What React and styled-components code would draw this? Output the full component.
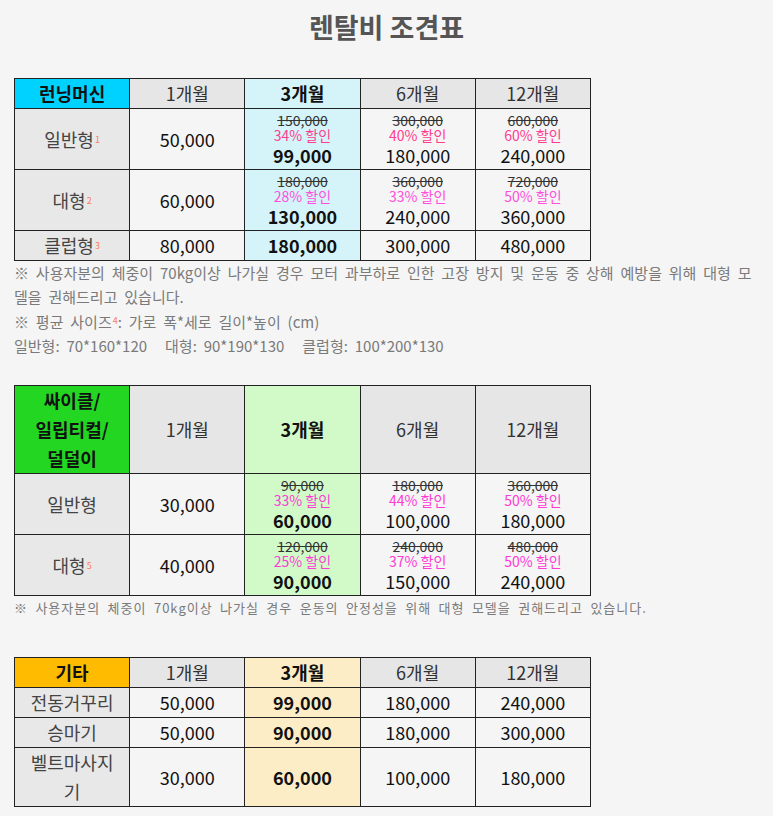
import React from "react";
import styled, { createGlobalStyle } from "styled-components";

const GlobalStyle = createGlobalStyle`
  body {
    margin: 0;
    background: #f5f5f5;
    font-family: "Noto Sans CJK KR", "Noto Sans", sans-serif;
    color: #222;
  }
`;

const Page = styled.div`
  padding: 12px 14px 6px;
`;

const Title = styled.h1`
  margin: 0 0 36px;
  text-align: center;
  font-size: 27px;
  line-height: 30px;
  font-weight: 700;
  color: #555;
`;

const Table = styled.table`
  width: 577px;
  table-layout: fixed;
  border-collapse: collapse;
  border: 1px solid #555;
  margin-top: ${(p) => p.$gap || 0}px;
`;

const HeadCell = styled.th`
  background: ${(p) => p.$bg || "#e6e6e6"};
  border: 1px solid #222;
  padding: 0;
  font-size: 18px;
  line-height: 29px;
  font-weight: ${(p) => (p.$bold ? 700 : 400)};
  color: ${(p) => (p.$bold ? "#111" : "#333")};
  text-align: center;
  vertical-align: middle;
`;

const LabelCell = styled.td`
  background: #e8e8e8;
  border: 1px solid #222;
  padding: 0 9px;
  font-size: 18px;
  line-height: 29px;
  color: #444;
  text-align: center;
  vertical-align: middle;
`;

const Cell = styled.td`
  background: ${(p) => p.$bg || "#f5f5f5"};
  border: 1px solid #222;
  padding: ${(p) => (p.$stack ? "4px 0 2px" : "0")};
  font-size: 18px;
  line-height: 29px;
  color: #111;
  text-align: center;
  vertical-align: middle;
`;

const Mark = styled.sup`
  font-size: 9px;
  color: #ff7a5c;
  vertical-align: 4px;
  margin-left: 1px;
`;

const Strike = styled.div`
  font-size: 14px;
  line-height: 15px;
  color: #333;
  text-decoration: line-through;
`;

const Discount = styled.div`
  font-size: 14px;
  line-height: 15px;
  color: ${(p) => p.$color};
`;

const Price = styled.div`
  font-size: 18px;
  line-height: 24px;
  font-weight: ${(p) => (p.$bold ? 700 : 400)};
`;

const Note = styled.p`
  margin: 0;
  font-size: ${(p) => p.$size || 15}px;
  line-height: 24px;
  letter-spacing: ${(p) => p.$spacing || 0}px;
  word-spacing: 3.5px;
  color: #7a7a7a;
`;

const Gap = styled.span`
  display: inline-block;
  width: ${(p) => p.$w}px;
`;

const months = ["1개월", "3개월", "6개월", "12개월"];

const tables = [
  {
    head: ["런닝머신"],
    headBg: "#00d2ff",
    tint: "#d5f4fa",
    gap: 0,
    rows: [
      {
        label: "일반형",
        mark: "1",
        pink: "#ff3c8e",
        cells: ["50,000", ["150,000", "34% 할인", "99,000"], ["300,000", "40% 할인", "180,000"], ["600,000", "60% 할인", "240,000"]],
      },
      {
        label: "대형",
        mark: "2",
        pink: "#ff4fdc",
        cells: ["60,000", ["180,000", "28% 할인", "130,000"], ["360,000", "33% 할인", "240,000"], ["720,000", "50% 할인", "360,000"]],
      },
      { label: "클럽형", mark: "3", cells: ["80,000", "180,000", "300,000", "480,000"] },
    ],
  },
  {
    head: ["싸이클/", "일립티컬/", "덜덜이"],
    headBg: "#22d622",
    tint: "#d2fac9",
    gap: 27,
    rows: [
      {
        label: "일반형",
        pink: "#ff3ad6",
        cells: ["30,000", ["90,000", "33% 할인", "60,000"], ["180,000", "44% 할인", "100,000"], ["360,000", "50% 할인", "180,000"]],
      },
      {
        label: "대형",
        mark: "5",
        pink: "#ff3ad6",
        cells: ["40,000", ["120,000", "25% 할인", "90,000"], ["240,000", "37% 할인", "150,000"], ["480,000", "50% 할인", "240,000"]],
      },
    ],
  },
  {
    head: ["기타"],
    headBg: "#ffbb00",
    tint: "#fcedc6",
    gap: 37,
    rows: [
      { label: "전동거꾸리", cells: ["50,000", "99,000", "180,000", "240,000"] },
      { label: "승마기", cells: ["50,000", "90,000", "180,000", "300,000"] },
      { label: "벨트마사지기", cells: ["30,000", "60,000", "100,000", "180,000"] },
    ],
  },
];

function PriceTable({ data }) {
  return (
    <Table $gap={data.gap}>
      <thead>
        <tr>
          <HeadCell $bg={data.headBg} $bold>
            {data.head.map((line) => (
              <div key={line}>{line}</div>
            ))}
          </HeadCell>
          {months.map((m, i) => (
            <HeadCell key={m} $bold={i === 1} $bg={i === 1 ? data.tint : undefined}>
              {m}
            </HeadCell>
          ))}
        </tr>
      </thead>
      <tbody>
        {data.rows.map((row) => (
          <tr key={row.label}>
            <LabelCell>
              {row.label}
              {row.mark && <Mark>{row.mark}</Mark>}
            </LabelCell>
            {row.cells.map((c, i) => {
              const bg = i === 1 ? data.tint : undefined;
              if (Array.isArray(c)) {
                return (
                  <Cell key={i} $bg={bg} $stack>
                    <Strike>{c[0]}</Strike>
                    <Discount $color={row.pink}>{c[1]}</Discount>
                    <Price $bold={i === 1}>{c[2]}</Price>
                  </Cell>
                );
              }
              return (
                <Cell key={i} $bg={bg}>
                  <Price as="span" $bold={i === 1}>{c}</Price>
                </Cell>
              );
            })}
          </tr>
        ))}
      </tbody>
    </Table>
  );
}

export default function App() {
  return (
    <>
      <GlobalStyle />
      <Page>
        <Title>렌탈비 조견표</Title>
        <PriceTable data={tables[0]} />
        <Note>
          ※ 사용자분의 체중이 70kg이상 나가실 경우 모터 과부하로 인한 고장 방지 및 운동 중 상해 예방을 위해 대형 모델을 권해드리고 있습니다.
        </Note>
        <Note>
          ※ 평균 사이즈<Mark>4</Mark>: 가로 폭*세로 길이*높이 (cm)
        </Note>
        <Note>
          일반형: 70*160*120<Gap $w={18} />대형: 90*190*130<Gap $w={18} />클럽형: 100*200*130
        </Note>
        <PriceTable data={tables[1]} />
        <Note $size={13} $spacing={1}>
          ※ 사용자분의 체중이 70kg이상 나가실 경우 운동의 안정성을 위해 대형 모델을 권해드리고 있습니다.
        </Note>
        <PriceTable data={tables[2]} />
      </Page>
    </>
  );
}
